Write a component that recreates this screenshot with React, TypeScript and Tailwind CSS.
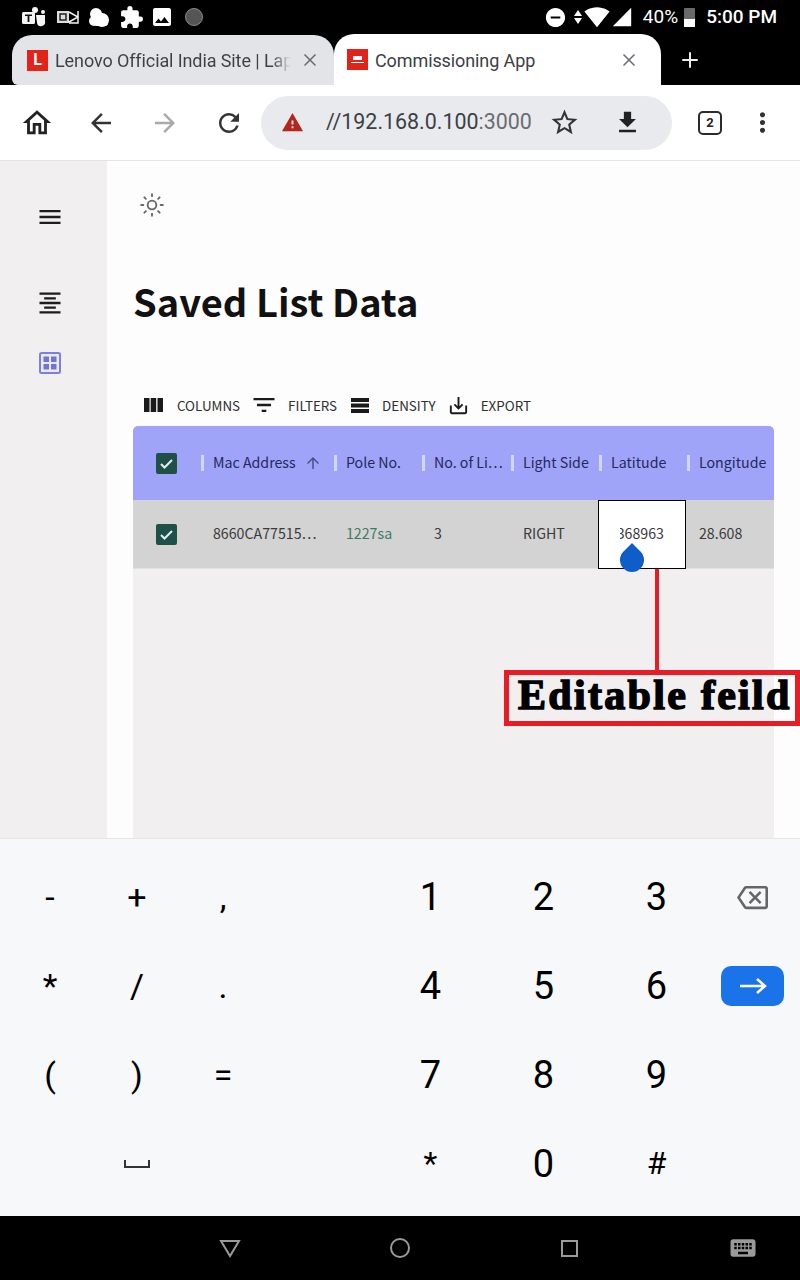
import React from 'react';
import { Sun, X, Plus } from 'lucide-react';
import {
  MdOutlineHome, MdArrowBack, MdArrowForward, MdRefresh, MdWarning, MdStarBorder, MdFileDownload, MdMoreVert,
  MdMenu, MdFormatAlignCenter, MdFilterList, MdSaveAlt, MdArrowUpward, MdOutlineBackspace,
  MdKeyboard, MdDoNotDisturbOn, MdSignalWifi4Bar, MdSignalCellular4Bar, MdExtension, MdImage,
} from 'react-icons/md';

const plex = { fontFamily: '"Noto Sans CJK JP", "Noto Sans", sans-serif' };

const StatusBar = () => (
  <div className="h-[34px] bg-black flex items-center text-white font-['Roboto',sans-serif]">
    <div className="flex items-center pl-[22px] gap-[9px]">
      <svg width="25" height="20" viewBox="0 0 25 20" fill="#f4f4f4">
        <rect x="0" y="5" width="13" height="12" rx="1.5" />
        <circle cx="13" cy="3" r="3" />
        <circle cx="21" cy="5" r="2" />
        <path d="M14 8h9v6a4 4 0 0 1-8 2z" />
        <path d="M3 7.5h7v1.6H7.4V15H5.6V9.100H3z" fill="#111" />
      </svg>
      <svg width="23" height="18" viewBox="0 0 23 18" fill="none" stroke="#f4f4f4">
        <rect x="1" y="3" width="12" height="12" fill="#ddd" stroke="none" />
        <rect x="4" y="6" width="6" height="6" stroke="#222" strokeWidth="1.500" />
        <path d="M13 4l9 5-9 5M22 3v12H13" strokeWidth="1.500" />
      </svg>
      <svg width="24" height="22" viewBox="0 0 24 22" fill="#fff">
        <circle cx="8" cy="8" r="6" />
        <circle cx="14" cy="14" r="7" />
        <circle cx="6" cy="15" r="5" />
        <rect x="6" y="14" width="14" height="6" rx="3" />
      </svg>
      <MdExtension size={25} className="-mx-[2px]" />
      <MdImage size={24} className="-ml-[1px]" />
      <span className="w-[18px] h-[18px] ml-[2px] rounded-full bg-[#555] border border-[#8a8a8a]" />
    </div>
    <div className="ml-auto flex items-center pr-[23px]">
      <MdDoNotDisturbOn size={23} />
      <span className="flex flex-col gap-[2px] ml-[7px] mr-[2px]">
        <span className="w-0 h-0 border-x-[4px] border-x-transparent border-b-[6px] border-b-white" />
        <span className="w-0 h-0 border-x-[4px] border-x-transparent border-t-[6px] border-t-white" />
      </span>
      <MdSignalWifi4Bar size={26} />
      <MdSignalCellular4Bar size={22} className="ml-[1px]" />
      <span className="ml-[10px] text-[19px]">40%</span>
      <span className="ml-[6px] w-[11px] h-[19px] rounded-[1px] flex flex-col bg-[#6a6a6a]">
        <span className="h-[11px]" />
        <span className="flex-1 bg-white" />
      </span>
      <span className="ml-[11px] text-[19px] font-medium">5:00 PM</span>
    </div>
  </div>
);

const TabStrip = () => (
  <div className="h-[51px] bg-black flex items-end font-['Roboto',sans-serif] text-[18px] tracking-[-0.1px] text-[#3c4043]">
    <div className="ml-[12px] w-[322px] h-[50px] bg-[#e3e4e8] rounded-t-[20px] rounded-bl-[6px] flex items-center pl-[15px] pr-[14px]">
      <span className="w-[21px] h-[21px] bg-[#e2231a] text-white text-[16px] font-bold flex items-center justify-center shrink-0">L</span>
      <span className="ml-[7px] w-[236px] pt-[1px] whitespace-nowrap bg-[linear-gradient(90deg,#3c4043_92%,#e3e4e8)] bg-clip-text text-transparent">Lenovo Official India Site | Lap</span>
      <X size={20} className="ml-auto text-[#6b6e73]" />
    </div>
    <div className="w-[327px] h-[51px] bg-white rounded-t-[20px] flex items-center pl-[13px] pr-[22px]">
      <span className="w-[21px] h-[21px] bg-[#e2231a] flex flex-col items-center justify-center gap-[2px] shrink-0">
        <span className="w-[9px] h-[4px] bg-white" />
        <span className="w-[13px] h-[1px] bg-white" />
      </span>
      <span className="ml-[7px] pt-[1px]">Commissioning App</span>
      <X size={20} className="ml-auto text-[#6b6e73]" />
    </div>
    <div className="flex-1 h-[51px] bg-black flex items-center pl-[17px]">
      <Plus size={24} className="text-[#ececec]" strokeWidth={2} />
    </div>
  </div>
);

const UrlBar = () => (
  <div className="h-[76px] bg-white border-b border-[#e4e4e4] flex items-center font-['Roboto',sans-serif]">
    <div className="w-[74px] flex justify-center"><MdOutlineHome size={34} className="text-[#222]" /></div>
    <div className="w-[54px] flex justify-center"><MdArrowBack size={30} className="text-[#333]" /></div>
    <div className="w-[74px] flex justify-center"><MdArrowForward size={30} className="text-[#aaa]" /></div>
    <div className="w-[54px] flex justify-center"><MdRefresh size={30} className="text-[#333]" /></div>
    <div className="ml-[5px] w-[411px] h-[54px] rounded-full bg-[#e9eaee] flex items-center pl-[20px]">
      <MdWarning size={23} className="text-[#b3261e]" />
      <span className="ml-[22px] w-[208px] text-[21.400px] text-[#3c4043] whitespace-nowrap">//192.168.0.100<span className="text-[#6a6c70]">:3000</span></span>
      <MdStarBorder size={31} className="ml-[15px] text-[#333]" />
      <MdFileDownload size={29} className="ml-[33px] text-[#222]" />
    </div>
    <div className="ml-[26px] w-[24px] h-[24px] rounded-[5px] border-[2.500px] border-[#2b2b2b] flex items-center justify-center text-[13px] font-bold text-[#222]">2</div>
    <MdMoreVert size={31} className="ml-[25px] text-[#333]" />
  </div>
);

const Sidebar = () => (
  <div className="w-[107px] bg-[#f1eff0] flex flex-col items-center pt-[42px] pr-[8px] shrink-0">
    <MdMenu size={28} className="text-[#1d1d1d]" />
    <MdFormatAlignCenter size={28} className="text-[#1d1d1d] mt-[58px]" />
    <svg width="22" height="22" viewBox="0 0 22 22" className="mt-[35px]">
      <rect x="1" y="1" width="20" height="20" rx="1.500" fill="#eceaf6" stroke="#7b7fe0" strokeWidth="2" />
      <rect x="4.500" y="4.500" width="5.500" height="5.500" fill="#7074d8" />
      <rect x="12" y="4.500" width="5.500" height="5.500" fill="#7074d8" />
      <rect x="4.500" y="12" width="5.500" height="5.500" fill="#7074d8" />
      <rect x="12" y="12" width="5.500" height="5.500" fill="#7074d8" />
    </svg>
  </div>
);

const ColumnsIcon = () => (
  <svg width="19" height="14" viewBox="0 0 19 14" fill="#1a1a1a">
    <rect x="0" width="5.500" height="14" />
    <rect x="6.700" width="5.500" height="14" />
    <rect x="13.500" width="5.500" height="14" />
  </svg>
);

const DensityIcon = () => (
  <svg width="18" height="15" viewBox="0 0 18 15" fill="#1a1a1a">
    <rect y="0" width="18" height="4" />
    <rect y="5.500" width="18" height="4" />
    <rect y="11" width="18" height="4" />
  </svg>
);

const Toolbar = () => (
  <div className="ml-[11px] mt-[63px] h-[26px] flex items-center text-[13.400px] text-[#2f2f2f]" style={plex}>
    <ColumnsIcon />
    <span className="ml-[14px]">COLUMNS</span>
    <MdFilterList size={28} className="ml-[10px] text-[#1a1a1a]" />
    <span className="ml-[10px]">FILTERS</span>
    <span className="ml-[14px]"><DensityIcon /></span>
    <span className="ml-[13px]">DENSITY</span>
    <MdSaveAlt size={23} className="ml-[11px] text-[#1a1a1a]" />
    <span className="ml-[11px]">EXPORT</span>
  </div>
);

const Check = () => (
  <span className="w-[21px] h-[21px] rounded-[2px] bg-[#1f5047] flex items-center justify-center">
    <svg width="15" height="15" viewBox="0 0 15 15" fill="none" stroke="#e4ecf4" strokeWidth="2"><path d="M2 8l3.500 3.500L13 4" /></svg>
  </span>
);

const COLS = 'grid grid-cols-[67px_133px_88px_89px_88px_88px_88px]';

const HeadCell = ({ label, sort }: { label: string; sort?: boolean }) => (
  <div className="flex items-center">
    <span className="w-[3px] h-[16px] ml-[1px] bg-[#d4d7f4]" />
    <span className="ml-[9px] pb-[1px] text-[#24285c] whitespace-nowrap">{label}</span>
    {sort && <MdArrowUpward size={18} className="ml-[8px] text-[#4a4e86]" />}
  </div>
);

const DataGrid = () => (
  <div className="relative mt-[8px] mr-[26px] flex-1 bg-[#f1eff0] rounded-t-[5px] text-[14.200px]" style={plex}>
    <div className={`${COLS} h-[74px] bg-[#a0a4f8] rounded-t-[5px]`}>
      <div className="flex items-center pl-[23px]"><Check /></div>
      <HeadCell label="Mac Address" sort />
      <HeadCell label="Pole No." />
      <HeadCell label="No. of Li…" />
      <HeadCell label="Light Side" />
      <HeadCell label="Latitude" />
      <HeadCell label="Longitude" />
    </div>
    <div className={`${COLS} h-[69px] bg-[#d3d3d3] border-b border-[#e0e0e0] text-[#3a3a3a]`}>
      <div className="flex items-center pl-[23px]"><Check /></div>
      <div className="flex items-center pl-[13px] pb-[2px]">8660CA77515…</div>
      <div className="flex items-center pl-[13px] pb-[2px] text-[#3d7a63]">1227sa</div>
      <div className="flex items-center pl-[13px] pb-[2px]">3</div>
      <div className="flex items-center pl-[13px] pb-[2px]">RIGHT</div>
      <div className="relative bg-white border border-black flex items-center justify-end pr-[21px] pb-[2px] h-[69px]">
        <span className="w-[44px] overflow-hidden flex justify-end">368963</span>
        <span className="absolute left-[21px] top-[47px] w-[24px] h-[24px] bg-[#0f5dc8] rounded-full rounded-tl-none rotate-45" />
      </div>
      <div className="flex items-center pl-[13px] pb-[2px]">28.608</div>
    </div>
    {/* annotation pasted over the screenshot */}
    <div className="absolute left-[522px] top-[143px] w-[4px] h-[101px] bg-[#e81c24]" />
    <div className="absolute left-[371px] top-[244px] w-[296px] h-[56px] border-[5px] border-[#e81c24] flex items-center pl-[9px] pb-[7px]">
      <span className="font-['Liberation_Serif',serif] font-bold text-[42px] leading-none text-black whitespace-nowrap tracking-[2.300px] [-webkit-text-stroke:1.500px_black]">Editable feild</span>
    </div>
  </div>
);

const ROWS: string[][] = [
  ['-', '+', ',', '1', '2', '3'],
  ['*', '/', '.', '4', '5', '6'],
  ['(', ')', '=', '7', '8', '9'],
  ['', '␣', '', '*', '0', '#'],
];

const LEFT_W = ['w-[100px]', 'w-[74px]', 'w-[98px]'];

const KeyRow = ({ keys, last }: { keys: string[]; last: React.ReactNode }) => (
  <div className="h-[89px] flex items-center font-['Roboto',sans-serif] text-black">
    {keys.slice(0, 3).map((k, i) => (
      <div key={i} className={`flex justify-center text-[34px] ${LEFT_W[i]}`}>
        {k === '␣' ? <span className="w-[26px] h-[8px] -mt-[2px] border-x-2 border-b-2 border-[#333]" /> : k}
      </div>
    ))}
    <div className="w-[102px]" />
    {keys.slice(3).map((k, i) => (
      <div key={i} className={`w-[113px] flex justify-center ${k === '*' || k === '#' ? 'text-[32px] pb-[3px]' : 'text-[38px]'}`}>{k}</div>
    ))}
    <div className="w-[87px] -ml-[4px] flex justify-center">{last}</div>
  </div>
);

const Keyboard = () => (
  <div className="h-[378px] bg-[#f7f8fa] border-t border-[#e6e6e6] pt-[14px]">
    <KeyRow keys={ROWS[0]} last={<MdOutlineBackspace size={31} className="text-[#666]" />} />
    <KeyRow keys={ROWS[1]} last={
      <span className="w-[63px] h-[40px] -mt-[2px] rounded-[10px] bg-[#1a73e8] flex items-center justify-center">
        <svg width="28" height="18" viewBox="0 0 28 18" fill="none" stroke="#fff" strokeWidth="2.500"><path d="M1 9h25M18 2l8 7-8 7" /></svg>
      </span>
    } />
    <KeyRow keys={ROWS[2]} last={null} />
    <KeyRow keys={ROWS[3]} last={null} />
  </div>
);

const NavBar = () => (
  <div className="h-[64px] bg-black flex items-center text-[#9a9a9a]">
    <svg width="22" height="20" viewBox="0 0 22 20" fill="none" stroke="currentColor" strokeWidth="2" className="ml-[219px]"><path d="M2 3h18l-9 15z" /></svg>
    <span className="ml-[149px] w-[20px] h-[20px] rounded-full border-2 border-[#9a9a9a]" />
    <span className="ml-[151px] w-[17px] h-[17px] border-2 border-[#9a9a9a]" />
    <MdKeyboard size={30} className="ml-[150px]" />
  </div>
);

export default function App() {
  return (
    <div className="w-[800px] h-[1280px] overflow-hidden flex flex-col bg-[#fdfdfd]">
      <StatusBar />
      <TabStrip />
      <UrlBar />
      <div className="flex-1 flex min-h-0">
        <Sidebar />
        <div className="flex-1 flex flex-col pl-[26px]">
          <Sun size={26} strokeWidth={1.700} className="ml-[6px] mt-[31px] text-[#666]" />
          <h1 className="mt-[55px] text-[38px] leading-[56px] font-bold text-[#111] whitespace-nowrap" style={plex}>Saved List Data</h1>
          <Toolbar />
          <DataGrid />
        </div>
      </div>
      <Keyboard />
      <NavBar />
    </div>
  );
}
